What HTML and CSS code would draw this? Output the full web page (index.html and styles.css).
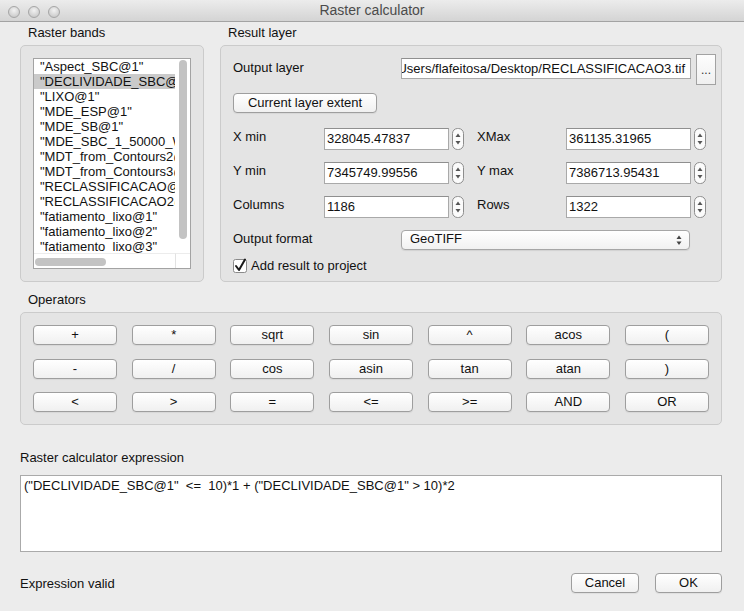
FILE: index.html
```html
<!DOCTYPE html>
<html>
<head>
<meta charset="utf-8">
<link rel="stylesheet" href="styles.css">
</head>
<body>
<div class="window">
  <div class="titlebar">
    <div class="lights"><span class="light"></span><span class="light"></span><span class="light"></span></div>
    <div class="title">Raster calculator</div>
    <div></div>
  </div>
  <div class="content">
    <div class="top">
      <div class="col-bands">
        <div class="section-label">Raster bands</div>
        <div class="group bands-group">
          <div class="listbox">
            <div class="list-items">
              <div class="item">"Aspect_SBC@1"</div>
              <div class="item selected">"DECLIVIDADE_SBC@1"</div>
              <div class="item">"LIXO@1"</div>
              <div class="item">"MDE_ESP@1"</div>
              <div class="item">"MDE_SB@1"</div>
              <div class="item">"MDE_SBC_1_50000_WGS@1"</div>
              <div class="item">"MDT_from_Contours2@1"</div>
              <div class="item">"MDT_from_Contours3@1"</div>
              <div class="item">"RECLASSIFICACAO@1"</div>
              <div class="item">"RECLASSIFICACAO2@1"</div>
              <div class="item">"fatiamento_lixo@1"</div>
              <div class="item">"fatiamento_lixo@2"</div>
              <div class="item">"fatiamento_lixo@3"</div>
            </div>
            <div class="vscroll"><div class="vthumb"></div></div>
            <div class="hscroll"><div class="hthumb"></div></div>
            <div class="corner"></div>
          </div>
        </div>
      </div>
      <div class="col-result">
        <div class="section-label">Result layer</div>
        <div class="group result-group">
          <div class="row-output">
            <div class="lbl grow out-lbl">Output layer</div>
            <div class="field path"><span>/Users/flafeitosa/Desktop/RECLASSIFICACAO3.tif</span></div>
            <div class="browse">...</div>
          </div>
          <div class="btn extent-btn">Current layer extent</div>
          <div class="coord-grid">
            <div class="lbl">X min</div>
            <div class="field">328045.47837</div>
            <div class="spin-cell"><svg class="spin" width="12" height="22" viewBox="0 0 12 22"><rect x="0.5" y="0.5" width="11" height="21" rx="5" fill="#fbfbfb" stroke="#8d8d8d"/><path d="M3.5 9 L6 5.5 L8.5 9 Z" fill="#555"/><path d="M3.5 13 L6 16.5 L8.5 13 Z" fill="#555"/></svg></div>
            <div class="lbl lbl2">XMax</div>
            <div class="field">361135.31965</div>
            <div class="spin-cell"><svg class="spin" width="12" height="22" viewBox="0 0 12 22"><rect x="0.5" y="0.5" width="11" height="21" rx="5" fill="#fbfbfb" stroke="#8d8d8d"/><path d="M3.5 9 L6 5.5 L8.5 9 Z" fill="#555"/><path d="M3.5 13 L6 16.5 L8.5 13 Z" fill="#555"/></svg></div>

            <div class="lbl">Y min</div>
            <div class="field">7345749.99556</div>
            <div class="spin-cell"><svg class="spin" width="12" height="22" viewBox="0 0 12 22"><rect x="0.5" y="0.5" width="11" height="21" rx="5" fill="#fbfbfb" stroke="#8d8d8d"/><path d="M3.5 9 L6 5.5 L8.5 9 Z" fill="#555"/><path d="M3.5 13 L6 16.5 L8.5 13 Z" fill="#555"/></svg></div>
            <div class="lbl lbl2">Y max</div>
            <div class="field">7386713.95431</div>
            <div class="spin-cell"><svg class="spin" width="12" height="22" viewBox="0 0 12 22"><rect x="0.5" y="0.5" width="11" height="21" rx="5" fill="#fbfbfb" stroke="#8d8d8d"/><path d="M3.5 9 L6 5.5 L8.5 9 Z" fill="#555"/><path d="M3.5 13 L6 16.5 L8.5 13 Z" fill="#555"/></svg></div>

            <div class="lbl">Columns</div>
            <div class="field">1186</div>
            <div class="spin-cell"><svg class="spin" width="12" height="22" viewBox="0 0 12 22"><rect x="0.5" y="0.5" width="11" height="21" rx="5" fill="#fbfbfb" stroke="#8d8d8d"/><path d="M3.5 9 L6 5.5 L8.5 9 Z" fill="#555"/><path d="M3.5 13 L6 16.5 L8.5 13 Z" fill="#555"/></svg></div>
            <div class="lbl lbl2">Rows</div>
            <div class="field">1322</div>
            <div class="spin-cell"><svg class="spin" width="12" height="22" viewBox="0 0 12 22"><rect x="0.5" y="0.5" width="11" height="21" rx="5" fill="#fbfbfb" stroke="#8d8d8d"/><path d="M3.5 9 L6 5.5 L8.5 9 Z" fill="#555"/><path d="M3.5 13 L6 16.5 L8.5 13 Z" fill="#555"/></svg></div>
          </div>
          <div class="format-row">
            <div class="lbl format-lbl">Output format</div>
            <div class="combo">
              <span>GeoTIFF</span>
              <svg width="8" height="12" viewBox="0 0 8 12"><path d="M1.5 5 L4 1.5 L6.5 5 Z" fill="#444"/><path d="M1.5 7.5 L4 11 L6.5 7.5 Z" fill="#444"/></svg>
            </div>
          </div>
          <div class="check-row">
            <svg class="checkbox" width="14" height="16" viewBox="0 0 14 16"><rect x="0.5" y="2.5" width="13" height="13" rx="2" fill="#fff" stroke="#8a8a8a"/><path d="M3 9 L6 13 L12 2.5" fill="none" stroke="#1a1a1a" stroke-width="2" stroke-linecap="round" stroke-linejoin="round"/></svg>
            <div class="lbl">Add result to project</div>
          </div>
        </div>
      </div>
    </div>

    <div class="section-label ops-label">Operators</div>
    <div class="group ops-group">
      <div class="btn">+</div><div class="btn">*</div><div class="btn">sqrt</div><div class="btn">sin</div><div class="btn">^</div><div class="btn">acos</div><div class="btn">(</div>
      <div class="btn">-</div><div class="btn">/</div><div class="btn">cos</div><div class="btn">asin</div><div class="btn">tan</div><div class="btn">atan</div><div class="btn">)</div>
      <div class="btn">&lt;</div><div class="btn">&gt;</div><div class="btn">=</div><div class="btn">&lt;=</div><div class="btn">&gt;=</div><div class="btn">AND</div><div class="btn">OR</div>
    </div>

    <div class="expr-label">Raster calculator expression</div>
    <div class="expr-box">("DECLIVIDADE_SBC@1"  &lt;=  10)*1 + ("DECLIVIDADE_SBC@1" &gt; 10)*2</div>

    <div class="bottom-row">
      <div class="grow">Expression valid</div>
      <div class="btn cancel-btn">Cancel</div>
      <div class="btn ok-btn">OK</div>
    </div>
  </div>
</div>
</body>
</html>
```

FILE: styles.css
```css
* { box-sizing: border-box; }

html, body {
  margin: 0;
  padding: 0;
}

body {
  width: 744px;
  height: 611px;
  overflow: hidden;
  background: #ececec;
  font-family: "Liberation Sans", Arial, sans-serif;
  font-size: 13px;
  color: #111;
}

.window {
  width: 744px;
  height: 611px;
}

.titlebar {
  height: 22px;
  display: grid;
  grid-template-columns: 1fr auto 1fr;
  background: linear-gradient(#ececec, #d4d4d4);
  border-bottom: 1px solid #a3a3a3;
}

.lights {
  display: flex;
  gap: 8px;
  padding: 6px 0 0 8px;
}

.light {
  width: 12px;
  height: 12px;
  border-radius: 50%;
  border: 1px solid #a6a6a6;
  background: radial-gradient(circle at 50% 35%, #f2f2f2, #cfcfcf 70%, #bdbdbd);
}

.title {
  font-size: 14px;
  line-height: 21px;
  color: #4b4b4b;
}

.content {
  padding: 0 22px 0 20px;
}

.top {
  display: flex;
  gap: 16px;
}

.col-bands { width: 184px; }
.col-result { flex: 1; }

.section-label {
  margin-top: 3px;
  margin-bottom: 4px;
  height: 16px;
  line-height: 16px;
  padding-left: 8px;
}

.group {
  background: #e4e4e4;
  border: 1px solid #cbcbcb;
  border-radius: 5px;
}

.bands-group {
  height: 237px;
  padding: 12px;
}

.listbox {
  width: 158px;
  height: 211px;
  border: 1px solid #a3a3a3;
  background: #fff;
  display: grid;
  grid-template-columns: 1fr 15px;
  grid-template-rows: 1fr 15px;
}

.list-items {
  overflow: hidden;
}

.item {
  height: 15px;
  line-height: 15px;
  padding-left: 6px;
  white-space: nowrap;
  overflow: hidden;
}

.item.selected {
  background: #cacaca;
}

.vscroll {
  padding: 1px 0 0 4px;
}

.vthumb {
  width: 8px;
  height: 179px;
  border-radius: 4px;
  background: #c3c3c3;
}

.hscroll {
  padding: 4px 0 0 1px;
  border-top: 1px solid #ececec;
}

.hthumb {
  width: 71px;
  height: 8px;
  border-radius: 4px;
  background: #c3c3c3;
}

.corner {
  border-top: 1px solid #ececec;
  border-left: 1px solid #e2e2e2;
}

.result-group {
  height: 237px;
  padding: 8px 5px 0 12px;
}

.grow { flex: 1; }

.row-output {
  display: flex;
  align-items: flex-start;
  height: 31px;
}

.out-lbl { margin-top: 5px; }

.field {
  height: 22px;
  border: 1px solid #a9a9a9;
  border-top-color: #8f8f8f;
  background: #fff;
  line-height: 20px;
  padding-left: 2px;
  white-space: nowrap;
  overflow: hidden;
}

.field.path {
  width: 290px;
  height: 21px;
  line-height: 19px;
  margin-top: 4px;
  margin-right: 5px;
  display: flex;
  justify-content: flex-end;
  padding: 0 5px 0 0;
}

.field.path span { flex-shrink: 0; }

.browse {
  width: 20px;
  height: 31px;
  border: 1px solid #a2a2a2;
  background: linear-gradient(#fdfdfd, #f0f0f0);
  text-align: center;
  line-height: 30px;
  font-size: 12px;
  color: #333;
}

.btn {
  height: 20px;
  border: 1px solid #9e9e9e;
  border-radius: 4px;
  background: linear-gradient(#ffffff, #f0f0f0);
  box-shadow: 0 1px 1px rgba(0, 0, 0, 0.06);
  text-align: center;
  line-height: 17px;
  white-space: nowrap;
}

.extent-btn {
  margin-top: 8px;
  width: 144px;
}

.coord-grid {
  margin-top: 15px;
  display: grid;
  grid-template-columns: 91px 125px 17px 100px 125px 17px;
  grid-auto-rows: 22px;
  row-gap: 12px;
}

.lbl {
  line-height: 18px;
}

.lbl2 { padding-left: 11px; }

.spin-cell {
  padding-left: 3px;
}

.spin { display: block; }

.format-row {
  margin-top: 12px;
  display: flex;
}

.format-lbl {
  width: 168px;
}

.combo {
  width: 289px;
  height: 20px;
  border: 1px solid #a6a6a6;
  border-radius: 4px;
  background: linear-gradient(#ffffff, #f1f1f1);
  box-shadow: 0 1px 1px rgba(0, 0, 0, 0.08);
  display: flex;
  align-items: center;
  justify-content: space-between;
  padding: 0 6px 0 8px;
}

.combo span { line-height: 16px; margin-top: -2px; }
.combo svg { display: block; }

.check-row {
  margin-top: 7px;
  display: flex;
  align-items: center;
  gap: 4px;
}

.checkbox { display: block; margin-top: -2px; }

.ops-label {
  margin-top: 10px;
}

.ops-group {
  height: 113px;
  padding: 12px;
  display: grid;
  grid-template-columns: repeat(7, 1fr);
  grid-auto-rows: 20px;
  column-gap: 14.67px;
  row-gap: 13.5px;
}

.expr-label {
  margin-top: 25px;
  height: 16px;
  line-height: 16px;
  margin-bottom: 9px;
}

.expr-box {
  height: 77px;
  border: 1px solid #aaaaaa;
  background: #fff;
  padding: 2px 3px;
  line-height: 16px;
  white-space: pre;
}

.bottom-row {
  margin-top: 21px;
  display: flex;
  align-items: center;
  height: 20px;
  gap: 16px;
}

.cancel-btn { width: 68px; }
.ok-btn { width: 67px; }
```
